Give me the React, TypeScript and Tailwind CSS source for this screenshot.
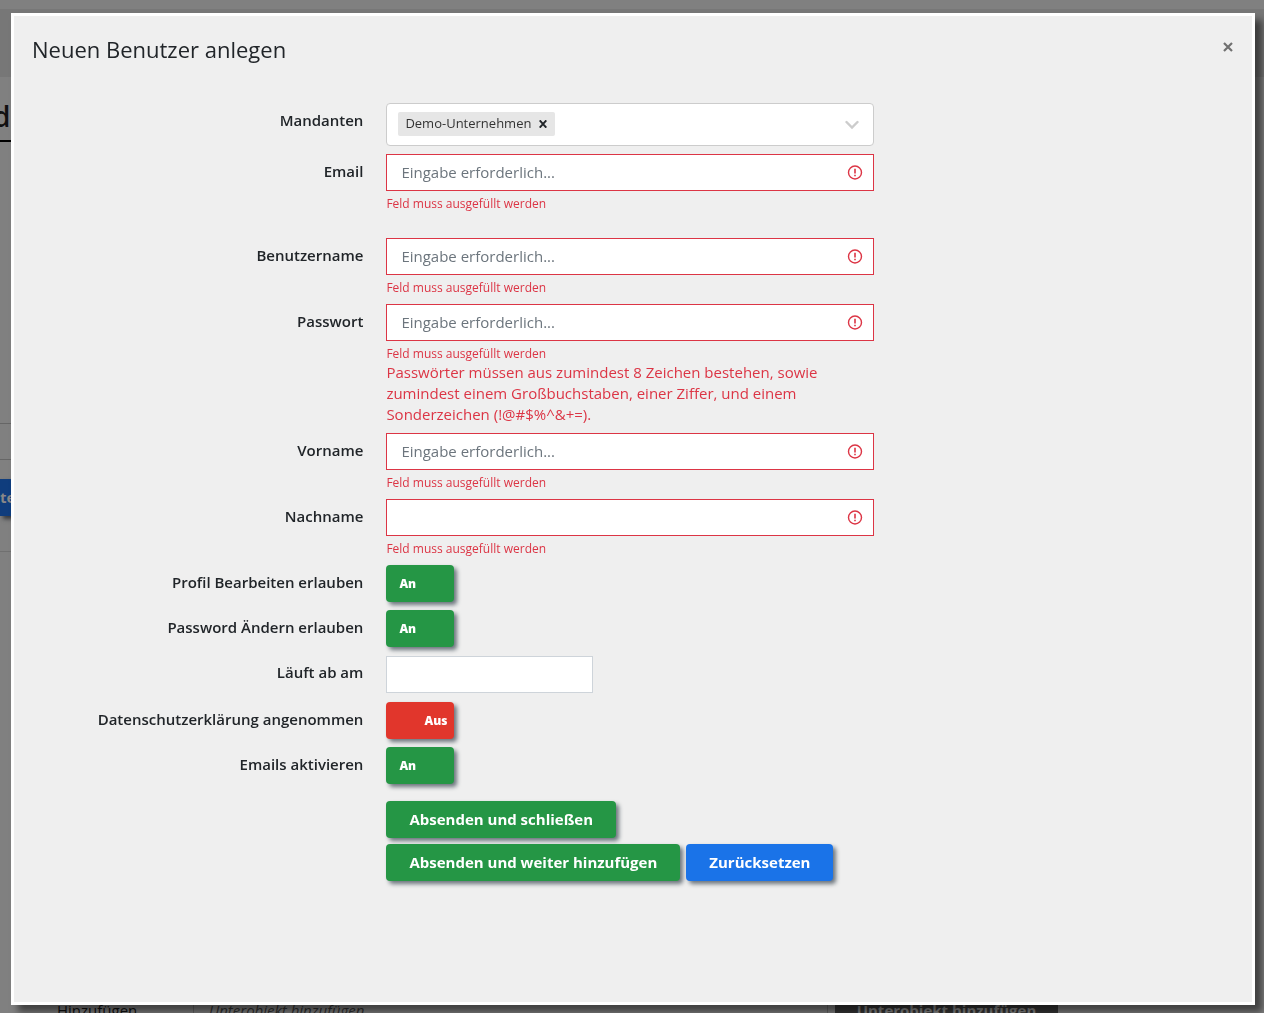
import { useId, useState, type ReactNode } from "react";

function Row({ id, label, children }: { id: string; label: string; children: ReactNode }) {
  return (
    <div className="grid grid-cols-[30%_40%]">
      <label htmlFor={id} className="pt-[7px] pr-[22px] text-right text-[15px] leading-5 font-semibold">
        {label}
      </label>
      <div className="pr-[7px] pl-px">{children}</div>
    </div>
  );
}

function AlertIcon() {
  return (
    <svg viewBox="0 0 16 16" className="size-4 shrink-0" fill="none" stroke="#dc3545" aria-hidden="true">
      <circle cx="8" cy="7.5" r="6.5" strokeWidth="1.4" />
      <path d="M8 3.700v4.800" strokeWidth="1.6" />
      <path d="M8 9.700v1.600" strokeWidth="1.6" />
    </svg>
  );
}

function RequiredField({
  label,
  type = "text",
  placeholder = "Eingabe erforderlich...",
  children,
}: {
  label: string;
  type?: string;
  placeholder?: string;
  children?: ReactNode;
}) {
  const id = useId();
  return (
    <Row id={id} label={label}>
      <div className="flex h-[37px] items-center border border-[#dc3545] bg-white pr-[10px]">
        <input
          id={id}
          type={type}
          placeholder={placeholder}
          className="h-full min-w-0 flex-1 bg-transparent px-[14px] pb-0.5 text-[15px] text-[#495057] outline-none placeholder:text-[#6c757d]"
        />
        <AlertIcon />
      </div>
      <p className="mt-1 text-xs leading-[17px] text-[#dc3545]">Feld muss ausgefüllt werden</p>
      {children}
    </Row>
  );
}

function Toggle({ label, initial }: { label: string; initial: boolean }) {
  const id = useId();
  const [on, setOn] = useState(initial);
  return (
    <Row id={id} label={label}>
      <button
        id={id}
        type="button"
        role="switch"
        aria-checked={on}
        onClick={() => setOn(!on)}
        className={
          "block h-[37px] w-[68px] rounded text-xs font-extrabold text-white shadow-[3px_3px_4px_#6c757d] " +
          (on ? "bg-[#259645] pl-[13px] text-left" : "bg-[#e1362c] pr-[7px] text-right")
        }
      >
        {on ? "An" : "Aus"}
      </button>
    </Row>
  );
}

const actionClass = "h-[37px] rounded px-[23px] text-[15px] font-bold text-white shadow-[3px_3px_4px_#6c757d]";

function PageBehind() {
  return (
    <div aria-hidden="true" className="flex h-screen flex-col overflow-hidden bg-[#808080]">
      <div className="mt-[9px] h-[68px] shrink-0 bg-[#777]" />
      <div className="mr-10 flex h-[65px] shrink-0 items-end border-b-2 border-black pb-2">
        <span className="-ml-[7px] text-[28px] leading-8 font-semibold text-[#111]">d</span>
      </div>
      <div className="mr-10 h-[282px] shrink-0 border-b border-[#666]" />
      <div className="mr-10 h-9 shrink-0 border-b border-[#666]" />
      <div className="mr-10 h-[92px] shrink-0 border-b border-[#707070] pt-[19px]">
        <div className="flex h-[37px] w-16 items-center bg-[#0f3d7d] text-[15px] font-bold text-[#888] shadow-[3px_3px_4px_#36393d]">
          te
        </div>
      </div>
      <div className="mt-[440px] flex h-9 shrink-0 text-[15px] leading-9 text-[#111]">
        <div className="w-[194px] border-r border-[#666] pl-[57px]">Hinzufügen</div>
        <div className="w-[634px] border-r border-[#666] pl-[15px] text-[#333] italic">Unterobjekt hinzufügen</div>
        <div className="ml-[7px] w-[223px] bg-[#363636] text-center font-bold text-[#888]">Unterobjekt hinzufügen</div>
      </div>
    </div>
  );
}

export default function App() {
  const [tenants, setTenants] = useState(["Demo-Unternehmen"]);
  return (
    <div className="h-screen overflow-hidden font-['Open_Sans',sans-serif] text-[#212529]">
      <PageBehind />
      <div
        role="dialog"
        aria-labelledby="dialog-title"
        className="fixed top-[13px] right-[9px] bottom-2 left-[11px] overflow-auto border-[3px] border-white bg-[#efefef] shadow-[7px_7px_7px_rgba(0,0,0,0.5)]"
      >
        <header className="flex items-start justify-between px-4 pt-[19px]">
          <h1 id="dialog-title" className="pl-0.5 text-[22px] leading-7">
            Neuen Benutzer anlegen
          </h1>
          <button type="button" aria-label="Schließen" className="mt-1 p-0.5">
            <svg viewBox="0 0 12 12" className="size-3" stroke="#707070" strokeWidth="2.2" aria-hidden="true">
              <path d="M2 2l8 8M10 2l-8 8" />
            </svg>
          </button>
        </header>

        <form className="mt-10 flex flex-col gap-2" onSubmit={(e) => e.preventDefault()}>
          <Row id="tenants" label="Mandanten">
            <div className="flex h-[43px] items-center rounded border border-[#ccc] bg-white pr-[14px] pl-[11px]">
              {tenants.map((name) => (
                <span
                  key={name}
                  className="mb-0.5 flex h-6 items-center rounded-xs bg-[#e6e6e6] pr-2 pl-[7px] text-[13px] text-[#333]"
                >
                  {name}
                  <button
                    type="button"
                    aria-label={name + " entfernen"}
                    onClick={() => setTenants(tenants.filter((t) => t !== name))}
                    className="ml-2"
                  >
                    <svg viewBox="0 0 8 8" className="size-2" stroke="#212529" strokeWidth="2" aria-hidden="true">
                      <path d="M.7.4l6.6 7.2M7.3.4L.7 7.6" />
                    </svg>
                  </button>
                </span>
              ))}
              <input
                id="tenants"
                role="combobox"
                aria-expanded="false"
                className="h-full min-w-0 flex-1 bg-transparent px-1 outline-none"
              />
              <svg
                viewBox="0 0 14 10"
                className="h-[10px] w-[14px]"
                fill="none"
                stroke="#ccc"
                strokeWidth="2.4"
                strokeLinecap="round"
                aria-hidden="true"
              >
                <path d="M1.500 2L7 7.600 12.500 2" />
              </svg>
            </div>
          </Row>

          <div className="mb-[18px]">
            <RequiredField label="Email" type="email" />
          </div>
          <RequiredField label="Benutzername" />
          <RequiredField label="Passwort" type="password">
            <p className="text-[15px] leading-[21px] text-[#dc3545]">
              Passwörter müssen aus zumindest 8 Zeichen bestehen, sowie zumindest einem Großbuchstaben, einer Ziffer, und
              einem Sonderzeichen (!@#$%^&amp;+=).
            </p>
          </RequiredField>
          <RequiredField label="Vorname" />
          <RequiredField label="Nachname" placeholder="" />

          <Toggle label="Profil Bearbeiten erlauben" initial={true} />
          <Toggle label="Password Ändern erlauben" initial={true} />
          <Row id="expires" label="Läuft ab am">
            <div className="py-px">
              <input
                id="expires"
                type="text"
                className="block h-[37px] w-[207px] border border-[#ced4da] bg-white px-[14px] text-[15px] outline-none"
              />
            </div>
          </Row>
          <Toggle label="Datenschutzerklärung angenommen" initial={false} />
          <Toggle label="Emails aktivieren" initial={true} />

          <div className="ml-[30%] flex flex-col items-start gap-1.5 pt-[9px] pl-px">
            <button type="submit" className={actionClass + " bg-[#259645]"}>
              Absenden und schließen
            </button>
            <div className="flex gap-1.5">
              <button type="submit" className={actionClass + " bg-[#259645]"}>
                Absenden und weiter hinzufügen
              </button>
              <button type="reset" className={actionClass + " bg-[#1a73e8]"}>
                Zurücksetzen
              </button>
            </div>
          </div>
        </form>
      </div>
    </div>
  );
}
